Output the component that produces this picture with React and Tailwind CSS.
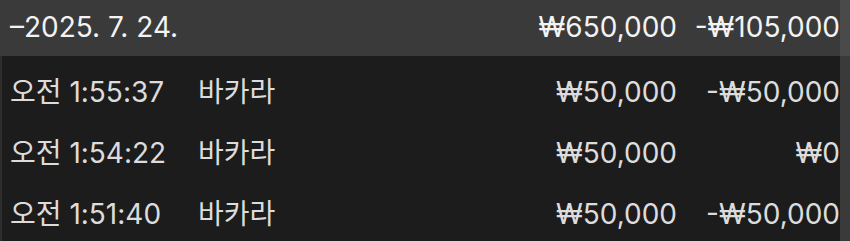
import React from 'react';

const rows = [
  { time: '오전 1:55:37', game: '바카라', bet: '₩50,000', result: '-₩50,000' },
  { time: '오전 1:54:22', game: '바카라', bet: '₩50,000', result: '₩0' },
  { time: '오전 1:51:40', game: '바카라', bet: '₩50,000', result: '-₩50,000' },
];

const font = { fontFamily: 'Inter, "Noto Sans CJK KR", sans-serif' };

const App = () => {
  return (
    <div className="w-[850px] h-[241px] overflow-hidden flex bg-[#1c1c1c]" style={font}>
      <div className="w-[2px] flex flex-col">
        <div className="h-[56px] bg-[#3a3a3a]" />
        <div className="flex-1 bg-[#2e2e2e]" />
      </div>
      <div className="flex-1 flex flex-col">
        {/* Day summary */}
        <div className="h-[56px] shrink-0 flex items-center pb-[2px] bg-[#3a3a3a] text-[28px] text-[#f3f3f3]">
          <div className="flex-1 pl-[8px]">–2025. 7. 24.</div>
          <div className="text-right">₩650,000</div>
          <div className="w-[163px] text-right">-₩105,000</div>
        </div>

        {/* Entries */}
        <div className="pt-[5px]">
          {rows.map((r, i) => (
            <div key={i} className="h-[61px] flex items-center text-[28px] text-[#dcdcdc]">
              <div className="w-[196px] pl-[8px]">{r.time}</div>
              <div className="flex-1">{r.game}</div>
              <div className="text-right">{r.bet}</div>
              <div className="w-[163px] text-right">{r.result}</div>
            </div>
          ))}
        </div>
      </div>
      {/* Scrollbar track */}
      <div className="w-[10px] flex flex-col">
        <div className="h-[56px] bg-[#4a4a4a]" />
        <div className="flex-1 bg-[#3a3a3a]" />
      </div>
    </div>
  );
};

export default App;
